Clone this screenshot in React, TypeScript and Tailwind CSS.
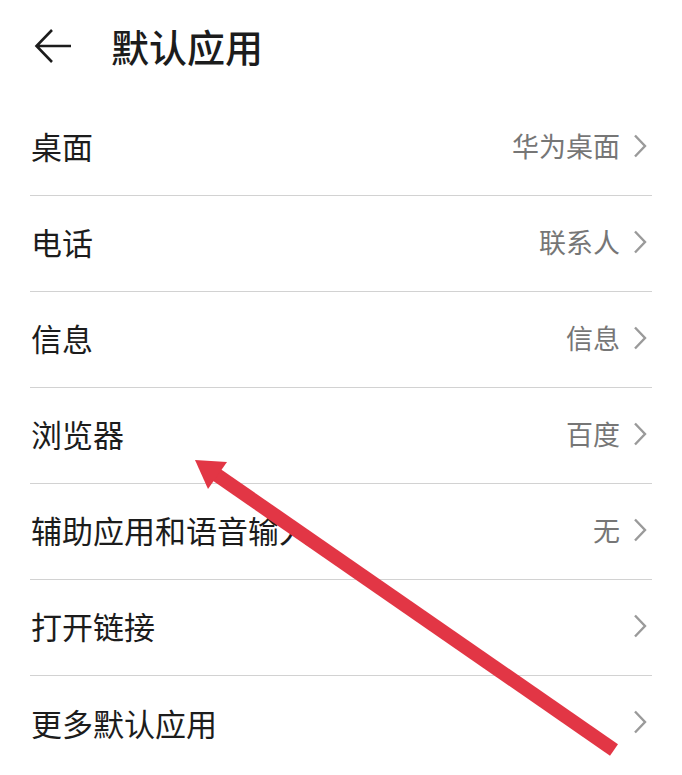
const rows: { label: string; value?: string }[] = [
  { label: '桌面', value: '华为桌面' },
  { label: '电话', value: '联系人' },
  { label: '信息', value: '信息' },
  { label: '浏览器', value: '百度' },
  { label: '辅助应用和语音输入', value: '无' },
  { label: '打开链接' },
  { label: '更多默认应用' },
];

function Row({ label, value, last }: { label: string; value?: string; last: boolean }) {
  return (
    <div className={`h-[96px] flex items-center mx-[30px] pb-[4px] ${last ? '' : 'border-b border-[#d2d2d2]'}`}>
      <span className="flex-1 text-[31px] leading-none text-[#1c1c1c] pl-[1px]">{label}</span>
      {value && <span className="text-[27px] leading-none text-[#767676] mr-[12px]">{value}</span>}
      <svg width="16" height="24" viewBox="0 0 16 24" className="mr-[4px]">
        <path d="M3 1.5 L13 12 L3 22.5" fill="none" stroke="#9a9a9a" strokeWidth="2.4" />
      </svg>
    </div>
  );
}

export default function App() {
  return (
    <div
      className="relative w-[682px] h-[775px] bg-white overflow-hidden"
      style={{ fontFamily: '"Noto Sans CJK SC", "Noto Sans", sans-serif' }}
    >
      <div className="h-[100px] flex items-center pb-[8px]">
        <svg width="40" height="40" viewBox="0 0 40 40" className="ml-[34px]">
          <path d="M37 20 H3 M18 4 L2.5 20 L18 36" fill="none" stroke="#1c1c1c" strokeWidth="2.6" />
        </svg>
        <h1 className="ml-[37px] text-[38px] font-medium leading-none text-[#1c1c1c]">默认应用</h1>
      </div>
      <div>
        {rows.map((r, i) => (
          <Row key={r.label} label={r.label} value={r.value} last={i === rows.length - 1} />
        ))}
      </div>
      <svg className="absolute inset-0 pointer-events-none" width="682" height="775" viewBox="0 0 682 775">
        <line x1="614" y1="750" x2="214" y2="473" stroke="#e23645" strokeWidth="14" />
        <polygon points="195,460 227,462 208,489" fill="#e23645" />
      </svg>
    </div>
  );
}
